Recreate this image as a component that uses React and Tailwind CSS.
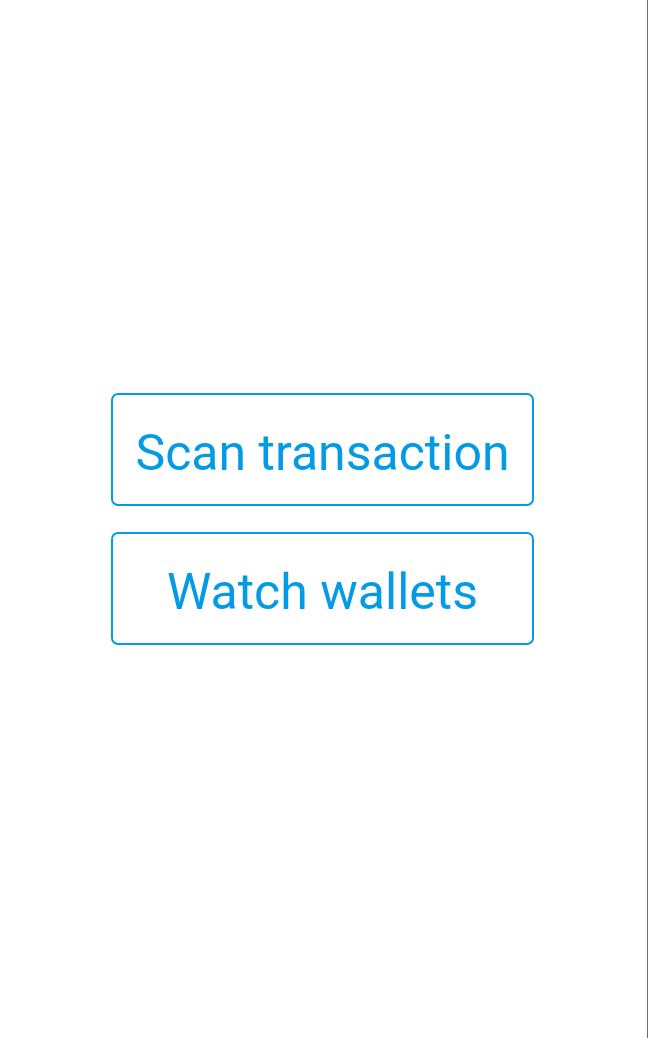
export default function App() {
  return (
    <div className="flex h-[1038px] w-full bg-white" style={{ fontFamily: "Roboto, sans-serif" }}>
      <div className="flex flex-1 flex-col items-center justify-center gap-[26px] pr-[2px]">
        <button className="flex h-[113px] w-[423px] items-center justify-center rounded-[7px] border-2 border-[#039be5] pt-[6px] text-[50px] leading-none text-[#039be5]">
          Scan transaction
        </button>
        <button className="flex h-[113px] w-[423px] items-center justify-center rounded-[7px] border-2 border-[#039be5] pt-[6px] text-[50px] leading-none text-[#039be5]">
          Watch wallets
        </button>
      </div>
      <div className="w-px bg-[#6b6b6b]" />
    </div>
  );
}
